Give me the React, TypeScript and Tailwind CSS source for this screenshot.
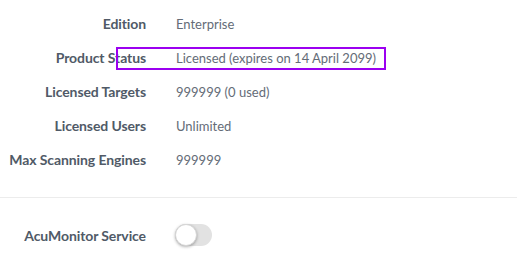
import type { ReactNode } from "react";

type Row = { label: string; value: ReactNode };

const rows: Row[] = [
  { label: "Edition", value: "Enterprise" },
  { label: "Product Status", value: "Licensed (expires on 14 April 2099)" },
  { label: "Licensed Targets", value: "999999 (0 used)" },
  { label: "Licensed Users", value: "Unlimited" },
  { label: "Max Scanning Engines", value: "999999" },
];

function InfoRow({ label, children }: { label: string; children: ReactNode }) {
  return (
    <div className="flex h-[34px] items-baseline leading-[34px]">
      <div className="w-[146px] shrink-0 text-right text-[14px] font-bold tracking-[-0.1px] text-[#505a67]">
        {label}
      </div>
      <div className="ml-[30px] text-[13px] text-[#646c77]">{children}</div>
    </div>
  );
}

export default function App() {
  return (
    <div
      className="relative h-[255px] w-[517px] overflow-hidden bg-white"
      style={{ fontFamily: "Lato, 'Liberation Sans', sans-serif" }}
    >
      <div className="pt-[7px]">
        {rows.map((row) => (
          <InfoRow key={row.label} label={row.label}>
            {row.value}
          </InfoRow>
        ))}
      </div>

      <div className="mt-[20px] h-px bg-[#ececec]" />

      <div className="mt-[20px] flex h-[34px] items-center">
        <div className="w-[146px] shrink-0 text-right text-[14px] font-bold tracking-[-0.1px] text-[#505a67]">
          AcuMonitor Service
        </div>
        <button
          type="button"
          className="relative ml-[29px] block h-[22px] w-[37px] rounded-full bg-[#e2e2e2]"
        >
          <span className="absolute left-0 top-0 h-[22px] w-[22px] rounded-full border border-[#d6d6d6] bg-white shadow-[0_1px_3px_rgba(0,0,0,0.3)]" />
        </button>
      </div>

      <div className="pointer-events-none absolute left-[116px] top-[47px] h-[23px] w-[270px] border-2 border-[#9b00f0]" />
    </div>
  );
}
